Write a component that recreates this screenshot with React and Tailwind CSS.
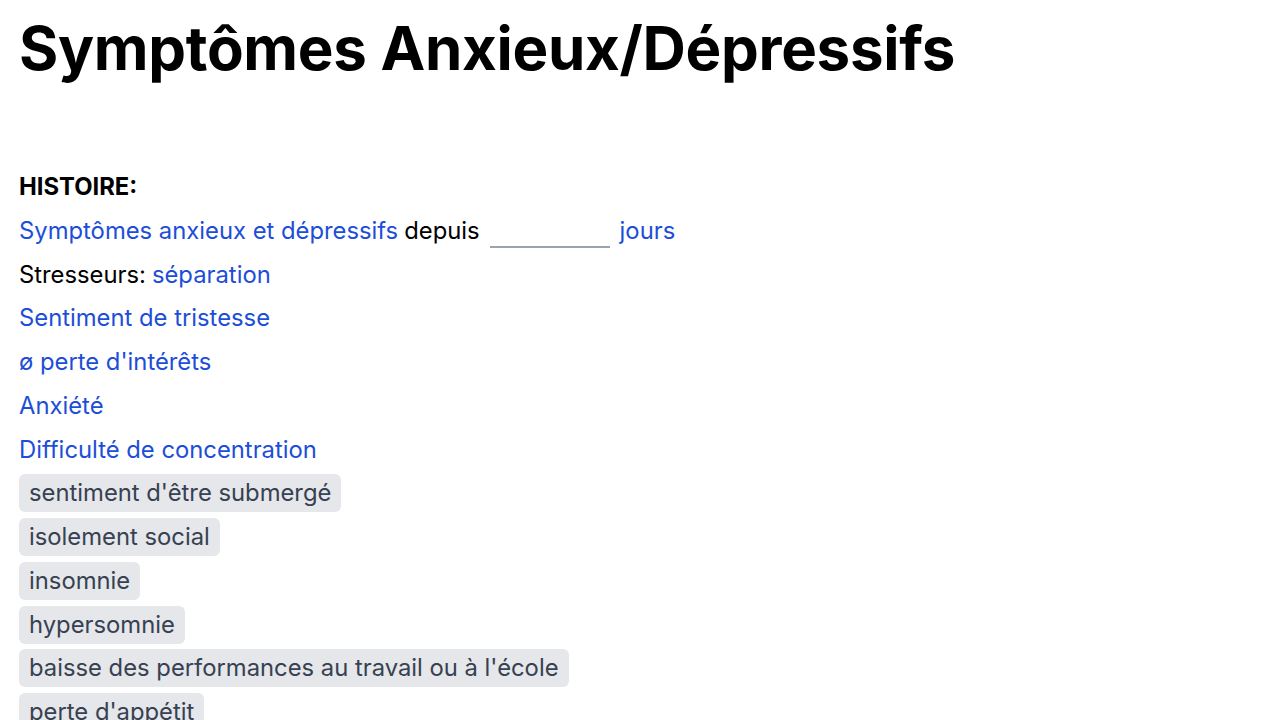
export default function App() {
  const chips = [
    "sentiment d'être submergé",
    "isolement social",
    "insomnie",
    "hypersomnie",
    "baisse des performances au travail ou à l'école",
    "perte d'appétit",
  ];
  return (
    <div className="min-h-screen bg-white px-[19px] pt-[14px]" style={{ fontFamily: "Inter, 'Noto Sans', sans-serif" }}>
      <h1 className="text-[60px] font-bold leading-[68px] text-black tracking-[-0.3px]">Symptômes Anxieux/Dépressifs</h1>
      <div className="mt-[86px] flex flex-col items-start gap-[5.75px] text-[23.8px] leading-[28px]">
        <div className="flex h-[38px] items-center font-bold text-black">HISTOIRE:</div>
        <div className="flex h-[38px] items-center gap-[6px]">
          <span className="text-[#1d4ed8]">Symptômes anxieux et dépressifs</span>
          <span className="text-black">depuis</span>
          <span className="mx-[4px] mt-[8px] inline-block h-[26px] w-[120px] border-b-2 border-[#9ca3af]"></span>
          <span className="text-[#1d4ed8]">jours</span>
        </div>
        <div className="flex h-[38px] items-center gap-[6px]">
          <span className="text-black">Stresseurs:</span>
          <span className="text-[#1d4ed8]">séparation</span>
        </div>
        <div className="flex h-[38px] items-center text-[#1d4ed8]">Sentiment de tristesse</div>
        <div className="flex h-[38px] items-center text-[#1d4ed8]">ø perte d'intérêts</div>
        <div className="flex h-[38px] items-center text-[#1d4ed8]">Anxiété</div>
        <div className="flex h-[38px] items-center text-[#1d4ed8]">Difficulté de concentration</div>
        {chips.map((c) => (
          <div key={c} className="flex h-[38px] items-center rounded-[6px] bg-[#e5e7eb] px-[10px] text-[#374151]">{c}</div>
        ))}
      </div>
    </div>
  );
}
